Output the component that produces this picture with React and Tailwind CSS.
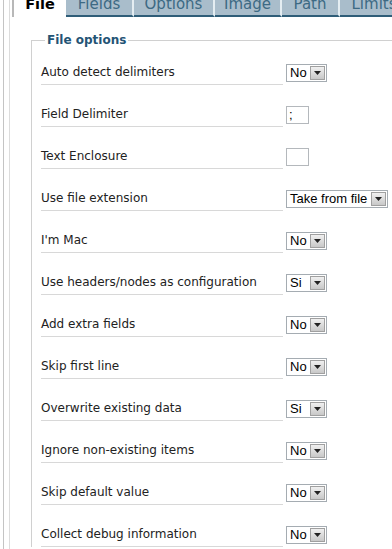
const tabs = [
  { name: "Fields", w: "w-[68px]" },
  { name: "Options", w: "w-[81px]" },
  { name: "Image", w: "w-[67px]" },
  { name: "Path", w: "w-[58px]" },
  { name: "Limits", w: "w-[70px]" },
];

const rows = [
  { label: "Auto detect delimiters", type: "select", value: "No" },
  { label: "Field Delimiter", type: "input", value: ";" },
  { label: "Text Enclosure", type: "input", value: "" },
  { label: "Use file extension", type: "select", value: "Take from file", wide: true },
  { label: "I'm Mac", type: "select", value: "No" },
  { label: "Use headers/nodes as configuration", type: "select", value: "Si" },
  { label: "Add extra fields", type: "select", value: "No" },
  { label: "Skip first line", type: "select", value: "No" },
  { label: "Overwrite existing data", type: "select", value: "Si" },
  { label: "Ignore non-existing items", type: "select", value: "No" },
  { label: "Skip default value", type: "select", value: "No" },
  { label: "Collect debug information", type: "select", value: "No" },
];

function FakeSelect({ value, wide }) {
  return (
    <div
      className={`flex h-[18px] items-center justify-between border border-[#a5acb2] bg-white ${
        wide ? "w-[102px]" : "w-[41px]"
      }`}
    >
      <span className="pl-[3px] font-['Liberation_Sans',sans-serif] text-[13px] leading-[16px] text-black">
        {value}
      </span>
      <span className="mr-[1px] flex h-[14px] w-[15px] items-center justify-center border border-[#a0a0a0] bg-gradient-to-b from-[#f0f0f0] to-[#c8c8c8]">
        <svg width="7" height="4" viewBox="0 0 7 4">
          <path d="M0 0h7L3.5 4z" fill="#222" />
        </svg>
      </span>
    </div>
  );
}

function FakeInput({ value }) {
  return (
    <div className="flex h-[18px] w-[23px] items-center border border-[#b4b8bc] bg-white pl-[2px] font-['Liberation_Sans',sans-serif] text-[13px] leading-[16px] text-black">
      {value}
    </div>
  );
}

export default function App() {
  return (
    <div className="h-[549px] w-[392px] overflow-hidden bg-white font-['DejaVu_Sans',sans-serif]">
      <div className="ml-[3px] h-full border-l border-[#c4c4c4] pl-[5px]">
        <div className="h-full border-l border-[#dcdcdc] pl-[2px]">
          <div className="flex h-[17px] overflow-hidden">
            <div className="flex w-[54px] shrink-0 justify-center border-l-2 border-[#b8b8b8] bg-white">
              <span className="-mt-[5px] block text-[14.5px] font-bold leading-[18px] text-black">File</span>
            </div>
            {tabs.map((t) => (
              <div
                key={t.name}
                className={`flex ${t.w} shrink-0 justify-center border-r-2 border-b-2 border-r-[#e4edf2] border-b-[#2f5d78] bg-[#a9bdcb]`}
              >
                <span className="-mt-[5px] block text-[15px] leading-[18px] text-[#3d6a84]">{t.name}</span>
              </div>
            ))}
          </div>
          <fieldset className="ml-[19px] mt-[15px] border border-r-0 border-b-0 border-[#d0d0d0] pl-[9px]">
            <legend className="ml-[4px] px-[2px] text-[12px] font-bold leading-[16px] text-[#245475]">
              File options
            </legend>
            <div className="-mt-[5px] flex flex-col">
              {rows.map((r) => (
                <div key={r.label} className="flex h-[42px] items-end">
                  <div className="w-[242px] border-b border-[#d8d8d8] pb-[4px] text-[12px] leading-[16px] text-[#222]">
                    {r.label}
                  </div>
                  <div className="mb-[3px] ml-[3px]">
                    {r.type === "select" ? <FakeSelect value={r.value} wide={r.wide} /> : <FakeInput value={r.value} />}
                  </div>
                </div>
              ))}
            </div>
          </fieldset>
        </div>
      </div>
    </div>
  );
}
